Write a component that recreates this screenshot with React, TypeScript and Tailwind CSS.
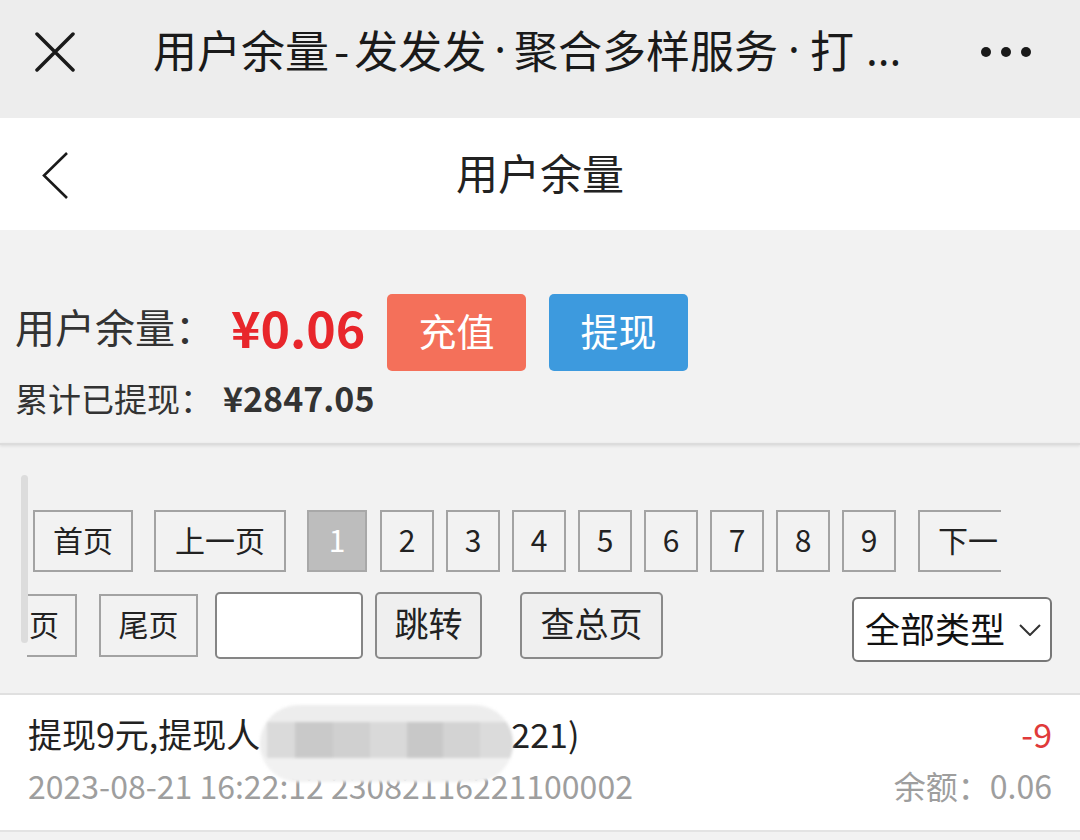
export default function App() {
  const pages = ["2", "3", "4", "5", "6", "7", "8", "9"];
  return (
    <div className="w-[1080px] h-[840px] overflow-hidden bg-[#f2f2f2] text-[#222] font-['Noto_Sans_CJK_SC','Noto_Sans',sans-serif]">
      {/* WeChat top bar */}
      <div className="h-[118px] bg-[#ededed] flex items-center pb-[14px]">
        <svg className="ml-[35px] shrink-0" width="40" height="40" viewBox="0 0 40 40">
          <path d="M2 2 L38 38 M38 2 L2 38" stroke="#1a1a1a" strokeWidth="3.5" strokeLinecap="round" />
        </svg>
        <div className="ml-[78px] pb-[6px] text-[44px] leading-[52px] text-[#1a1a1a] whitespace-nowrap flex items-center">
          <span>用户余量</span>
          <span className="px-[5px]">-</span>
          <span>发发发</span>
          <span className="px-[8px] font-['Noto_Sans',sans-serif]">·</span>
          <span>聚合多样服务</span>
          <span className="px-[10px] font-['Noto_Sans',sans-serif]">·</span>
          <span>打</span>
          <span className="ml-[12px] font-['Noto_Sans',sans-serif]">...</span>
        </div>
        <svg className="ml-auto mr-[48px] shrink-0" width="52" height="12" viewBox="0 0 52 12">
          <circle cx="6" cy="6" r="5" fill="#1a1a1a" />
          <circle cx="26" cy="6" r="5" fill="#1a1a1a" />
          <circle cx="46" cy="6" r="5" fill="#1a1a1a" />
        </svg>
      </div>

      {/* Nav bar */}
      <div className="h-[112px] bg-white relative flex items-center justify-center">
        <svg className="absolute left-[41px] top-[33px]" width="30" height="49" viewBox="0 0 30 49">
          <path d="M26 2 L3 24.5 L26 47" stroke="#1a1a1a" strokeWidth="2.6" fill="none" strokeLinejoin="miter" />
        </svg>
        <div className="text-[42px] leading-[50px] text-[#222] pb-[5px]">用户余量</div>
      </div>

      {/* Balance section */}
      <div className="pl-[15px] pt-[64px] pb-[23px]">
        <div className="flex items-center h-[77px]">
          <span className="w-[210px] pb-[14px] text-[40px] leading-[48px] text-[#333]">用户余量：</span>
          <span className="w-[162px] pl-[6px] pb-[14px] text-[50px] leading-[56px] font-bold text-[#e8262b]">¥0.06</span>
          <div className="w-[139px] h-[77px] pb-[6px] rounded-[5px] bg-[#f4705a] flex items-center justify-center text-white text-[38px] leading-none">
            充值
          </div>
          <div className="ml-[23px] w-[139px] h-[77px] pb-[6px] rounded-[5px] bg-[#3d9ade] flex items-center justify-center text-white text-[38px] leading-none">
            提现
          </div>
        </div>
        <div className="mt-[9px] flex items-center h-[40px] pb-[4px]">
          <span className="w-[208px] text-[33px] leading-[40px] text-[#333]">累计已提现：</span>
          <span className="text-[34px] leading-[40px] font-bold text-[#333]">¥2847.05</span>
        </div>
      </div>
      <div className="h-[2px] bg-[#dcdcdc] shadow-[0_1px_3px_rgba(0,0,0,0.12)]" />

      {/* Pagination */}
      <div className="relative h-[248px] pl-[27px]">
        <div className="absolute left-[21px] top-[30px] w-[7px] h-[168px] rounded-full bg-[#dcdcdc]" />
        <div className="pt-[65px] flex items-start h-[127px] text-[30px] leading-none text-[#222]">
          <div className="ml-[6px] w-[100px] h-[62px] pb-[5px] border-2 border-[#a3a3a3] flex items-center justify-center">首页</div>
          <div className="ml-[21px] w-[132px] h-[62px] pb-[5px] border-2 border-[#a3a3a3] flex items-center justify-center">上一页</div>
          <div className="ml-[21px] w-[60px] h-[62px] pb-[5px] border-2 border-[#a8a8a8] bg-[#bdbdbd] text-white flex items-center justify-center">1</div>
          <div className="ml-[13px] flex gap-[12px]">
            {pages.map((p) => (
              <div key={p} className="w-[54px] h-[62px] pb-[5px] border-2 border-[#a3a3a3] flex items-center justify-center">
                {p}
              </div>
            ))}
          </div>
          <div className="ml-[22px] w-[83px] h-[62px] pb-[5px] border-y-2 border-l-2 border-[#a3a3a3] flex items-center pl-[18px] overflow-hidden whitespace-nowrap">
            下一
          </div>
        </div>
        <div className="mt-[20px] flex items-start h-[70px]">
          <div className="mt-[2px] w-[50px] h-[63px] pb-[5px] border-y-2 border-r-2 border-[#a3a3a3] flex items-center text-[30px] leading-none pl-[2px]">页</div>
          <div className="mt-[2px] ml-[22px] w-[99px] h-[63px] pb-[5px] border-2 border-[#a3a3a3] flex items-center justify-center text-[30px] leading-none">尾页</div>
          <div className="ml-[17px] w-[148px] h-[67px] rounded-[5px] border-2 border-[#858585] bg-white" />
          <div className="ml-[12px] w-[107px] h-[67px] pb-[5px] rounded-[5px] border-2 border-[#8a8a8a] bg-[#efefef] flex items-center justify-center text-[34px] leading-none">跳转</div>
          <div className="ml-[38px] w-[143px] h-[67px] pb-[5px] rounded-[5px] border-2 border-[#8a8a8a] bg-[#efefef] flex items-center justify-center text-[34px] leading-none">查总页</div>
          <div className="mt-[5px] ml-[189px] w-[200px] h-[65px] rounded-[6px] border-2 border-[#777] bg-white flex items-center pl-[11px] text-[35px] leading-none text-[#111]">
            <span className="pb-[5px]">全部类型</span>
            <svg className="ml-[14px]" width="22" height="12" viewBox="0 0 22 12">
              <path d="M1 1 L11 11 L21 1" stroke="#333" strokeWidth="2" fill="none" />
            </svg>
          </div>
        </div>
      </div>

      {/* List */}
      <div className="h-[2px] bg-[#e0e0e0]" />
      <div className="relative bg-white h-[135px] px-[28px] pt-[17px]">
        <div className="flex items-center justify-between h-[44px]">
          <div className="flex items-center text-[34px] leading-[44px] text-[#222] whitespace-nowrap">
            <span>提现9元,提现人</span>
            <span className="inline-block w-[251px]" />
            <span>221)</span>
          </div>
          <span className="text-[34px] leading-[44px] text-[#e03a3a]">-9</span>
        </div>
        <div className="mt-[9px] flex items-center justify-between h-[40px] text-[32px] leading-[40px] text-[#9e9e9e] whitespace-nowrap">
          <span>2023-08-21 16:22:12 23082116221100002</span>
          <span>余额：0.06</span>
        </div>
        <div className="absolute left-[260px] top-[10px] w-[253px] h-[77px] rounded-full overflow-hidden bg-[#ededed] blur-[1.5px]">
          <div className="absolute left-0 right-0 bottom-0 h-[26px] bg-[#f1f1f1]" />
          <div className="absolute left-[7px] top-[17px] flex h-[36px]">
            <div className="w-[28px] bg-[#dadada]" />
            <div className="w-[38px] bg-[#c9c9c9]" />
            <div className="w-[37px] bg-[#d0d0d0]" />
            <div className="w-[37px] bg-[#d9d9d9]" />
            <div className="w-[36px] bg-[#c8c8c8]" />
            <div className="w-[37px] bg-[#d3d3d3]" />
            <div className="w-[33px] bg-[#dbdbdb]" />
          </div>
        </div>
      </div>
      <div className="h-[2px] bg-[#e3e3e3]" />
    </div>
  );
}
